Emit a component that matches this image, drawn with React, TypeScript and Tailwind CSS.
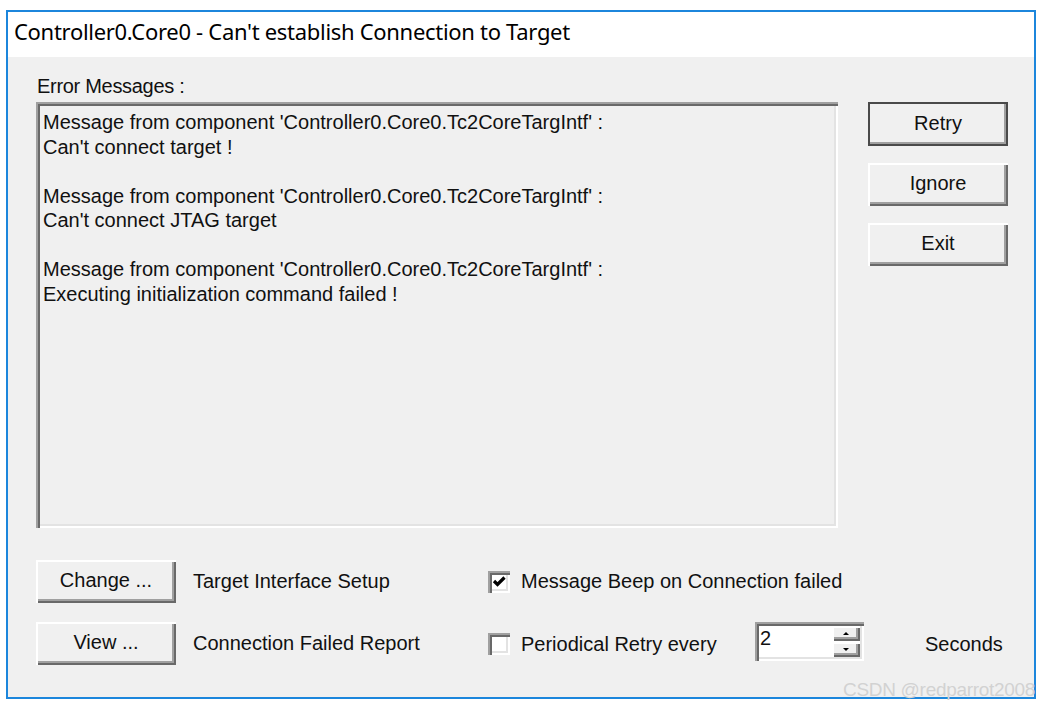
import React from 'react'

const raised =
  'bg-[#f0f0f0] shadow-[inset_2px_2px_0_#ffffff,inset_-2px_-2px_0_#696969,inset_-4px_-4px_0_#a0a0a0]'
const sunken =
  'shadow-[inset_2px_2px_0_#a0a0a0,inset_4px_4px_0_#696969,inset_-2px_-2px_0_#ffffff,inset_-4px_-4px_0_#e3e3e3]'

function Button({ label, h = 'h-[43px]', isDefault = false }: { label: string; h?: string; isDefault?: boolean }) {
  return (
    <div
      className={`w-[140px] ${h} ${raised} flex items-center justify-center ${
        isDefault ? 'outline-2 outline-[#4a4a4a] -outline-offset-2' : ''
      }`}
    >
      <span className="pb-[3px]">{label}</span>
    </div>
  )
}

function CheckBox({ checked }: { checked: boolean }) {
  return (
    <div className={`w-[22px] h-[22px] bg-white ${sunken} flex items-center justify-center`}>
      {checked && (
        <svg width="15" height="13" viewBox="0 0 15 13" className="ml-[1px]">
          <path d="M2 6 L5.5 9.5 L12.5 2.5" fill="none" stroke="#000" strokeWidth="3.2" />
        </svg>
      )}
    </div>
  )
}

function SpinBox() {
  return (
    <div className={`w-[109px] h-[39px] bg-white ${sunken} flex p-[4px]`}>
      <div className="flex-1 leading-[24px] pl-[1px]">2</div>
      <div className="w-[28px] flex flex-col gap-[1px]">
        <div className={`flex-1 ${raised} flex items-center justify-center`}>
          <svg width="8" height="5" viewBox="0 0 8 5">
            <path d="M1 4 L4 1 L7 4 Z" fill="#000" />
          </svg>
        </div>
        <div className={`flex-1 ${raised} flex items-center justify-center`}>
          <svg width="8" height="5" viewBox="0 0 8 5">
            <path d="M1 1 L4 4 L7 1 Z" fill="#000" />
          </svg>
        </div>
      </div>
    </div>
  )
}

const messages = [
  "Message from component 'Controller0.Core0.Tc2CoreTargIntf' :",
  "Can't connect target !",
  '',
  "Message from component 'Controller0.Core0.Tc2CoreTargIntf' :",
  "Can't connect JTAG target",
  '',
  "Message from component 'Controller0.Core0.Tc2CoreTargIntf' :",
  'Executing initialization command failed !',
]

export default function App() {
  return (
    <div className="w-[1044px] h-[708px] bg-white pl-[6px] pt-[10px] relative overflow-hidden">
      <div className="w-[1030px] h-[689px] border-2 border-[#1c86dc] flex flex-col">
        <div className="h-[45px] bg-white pl-[6px] pt-[4px] text-[22px] leading-[30px] text-black font-['Noto_Sans',sans-serif] tracking-[-0.3px] whitespace-nowrap">
          Controller0.Core0 - Can't establish Connection to Target
        </div>
        <div className="flex-1 bg-[#f0f0f0] text-[20px] leading-[24px] text-[#111] font-['Liberation_Sans',Arial,sans-serif]">
          <div className="flex pl-[28px] pt-[17px]">
            <div className="w-[802px]">
              <div className="h-[28px] pl-[1px] tracking-[-0.3px]">Error Messages :</div>
              <div className={`h-[426px] ${sunken} pl-[7px] pt-[8px] leading-[24.5px]`}>
                {messages.map((m, i) => (
                  <div key={i} className="h-[24.5px] whitespace-pre">
                    {m}
                  </div>
                ))}
              </div>
            </div>
            <div className="ml-[30px] pt-[28px] flex flex-col gap-[17px]">
              <Button label="Retry" h="h-[44px]" isDefault />
              <Button label="Ignore" />
              <Button label="Exit" />
            </div>
          </div>
          <div className="pl-[28px] pt-[32px] flex flex-col gap-[19px]">
            <div className="flex items-center h-[43px]">
              <div className="w-[452px] flex items-center">
                <Button label="Change ..." />
                <span className="ml-[17px] pb-[2px]">Target Interface Setup</span>
              </div>
              <CheckBox checked />
              <span className="ml-[11px] pb-[1px]">Message Beep on Connection failed</span>
            </div>
            <div className="flex items-center h-[43px]">
              <div className="w-[452px] flex items-center">
                <Button label="View ..." />
                <span className="ml-[17px] pb-[2px]">Connection Failed Report</span>
              </div>
              <CheckBox checked={false} />
              <span className="ml-[11px] w-[234px]">Periodical Retry every</span>
              <div className="mb-[4px]">
                <SpinBox />
              </div>
              <span className="ml-[61px]">Seconds</span>
            </div>
          </div>
        </div>
      </div>
      <div className="absolute left-[843px] top-[679px] text-[19px] leading-[22px] text-[#d2d2d2] font-['Liberation_Sans',Arial,sans-serif] tracking-[-0.3px] whitespace-nowrap">
        CSDN @redparrot2008
      </div>
    </div>
  )
}
